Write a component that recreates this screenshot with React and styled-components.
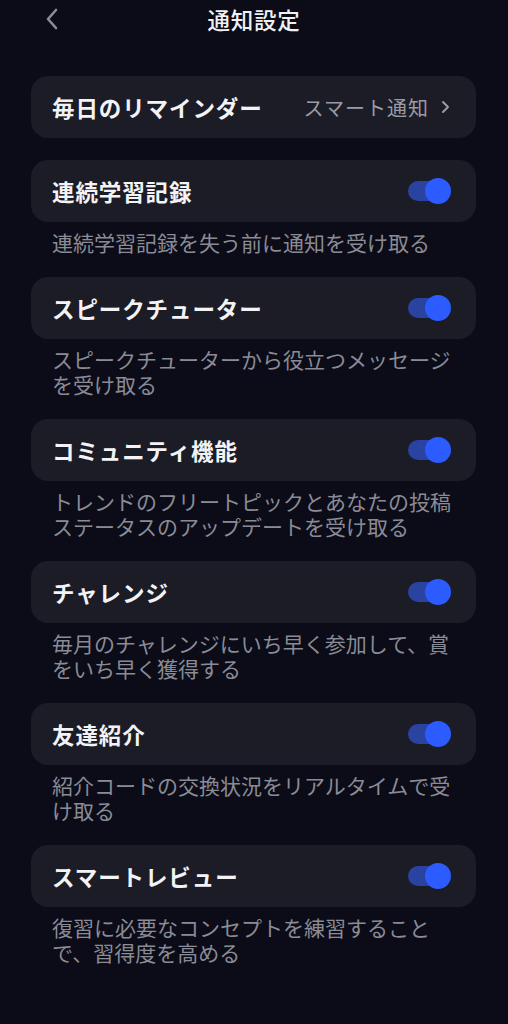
import styled, { createGlobalStyle } from 'styled-components';

const GlobalStyle = createGlobalStyle`
  body {
    margin: 0;
    background-color: #0b0c18;
    font-family: "Noto Sans CJK JP", "Noto Sans", sans-serif;
  }
`;

const Page = styled.div`
  width: 508px;
  min-height: 1024px;
  background-color: #0b0c18;
  color: #f1f1f4;
`;

const Header = styled.div`
  position: relative;
  height: 38px;
  display: flex;
  align-items: center;
  justify-content: center;
  margin-bottom: 38px;
`;

const BackButton = styled.div`
  position: absolute;
  left: 42px;
  top: 6px;
  width: 20px;
  height: 26px;
  display: flex;
  align-items: center;
  justify-content: center;
`;

const Title = styled.h1`
  margin: 0;
  font-size: 22.5px;
  font-weight: 500;
  line-height: 38px;
  letter-spacing: 0.8px;
`;

const List = styled.div`
  display: flex;
  flex-direction: column;
  padding: 0 32px 0 31px;
`;

const Section = styled.div`
  display: flex;
  flex-direction: column;
  margin-bottom: 22px;
`;

const Card = styled.div`
  height: 62px;
  border-radius: 17px;
  background-color: #1b1c26;
  display: flex;
  align-items: center;
  justify-content: space-between;
  padding: 0 24px 0 21px;
`;

const Label = styled.div`
  font-size: 22.5px;
  font-weight: 600;
  letter-spacing: 0.9px;
  color: #f3f3f6;
`;

const Value = styled.div`
  display: flex;
  align-items: center;
  gap: 12px;
  font-size: 20px;
  letter-spacing: 1px;
  color: #9a9ba4;
  margin-right: 2px;
`;

const Description = styled.p`
  margin: 8px 0 0;
  padding: 0 20px 0 21px;
  font-size: 21px;
  line-height: 25px;
  color: #8a8b95;
`;

const Track = styled.div`
  position: relative;
  width: 40px;
  height: 20px;
  border-radius: 10px;
  background-color: #2b43a0;
  margin-right: 4px;
`;

const Knob = styled.div`
  position: absolute;
  right: -3px;
  top: -3px;
  width: 26px;
  height: 26px;
  border-radius: 50%;
  background-color: #2c5bff;
`;

const Toggle = () => (
  <Track>
    <Knob />
  </Track>
);

const items = [
  { label: '連続学習記録', desc: '連続学習記録を失う前に通知を受け取る' },
  { label: 'スピークチューター', desc: 'スピークチューターから役立つメッセージを受け取る' },
  { label: 'コミュニティ機能', desc: 'トレンドのフリートピックとあなたの投稿ステータスのアップデートを受け取る' },
  { label: 'チャレンジ', desc: '毎月のチャレンジにいち早く参加して、賞をいち早く獲得する' },
  { label: '友達紹介', desc: '紹介コードの交換状況をリアルタイムで受け取る' },
  { label: 'スマートレビュー', desc: '復習に必要なコンセプトを練習することで、習得度を高める' },
];

const App = () => {
  return (
    <Page>
      <GlobalStyle />
      <Header>
        <BackButton>
          <svg width="14" height="22" viewBox="0 0 14 22" fill="none">
            <path d="M11 2 L3 11 L11 20" stroke="#8c8d96" strokeWidth="2.6" strokeLinecap="round" strokeLinejoin="round" />
          </svg>
        </BackButton>
        <Title>通知設定</Title>
      </Header>
      <List>
        <Section>
          <Card>
            <Label>毎日のリマインダー</Label>
            <Value>
              スマート通知
              <svg width="9" height="14" viewBox="0 0 9 14" fill="none">
                <path d="M2 2 L7 7 L2 12" stroke="#9a9ba4" strokeWidth="2" strokeLinecap="round" strokeLinejoin="round" />
              </svg>
            </Value>
          </Card>
        </Section>
        {items.map((item) => (
          <Section key={item.label}>
            <Card>
              <Label>{item.label}</Label>
              <Toggle />
            </Card>
            <Description>{item.desc}</Description>
          </Section>
        ))}
      </List>
    </Page>
  );
};

export default App;
